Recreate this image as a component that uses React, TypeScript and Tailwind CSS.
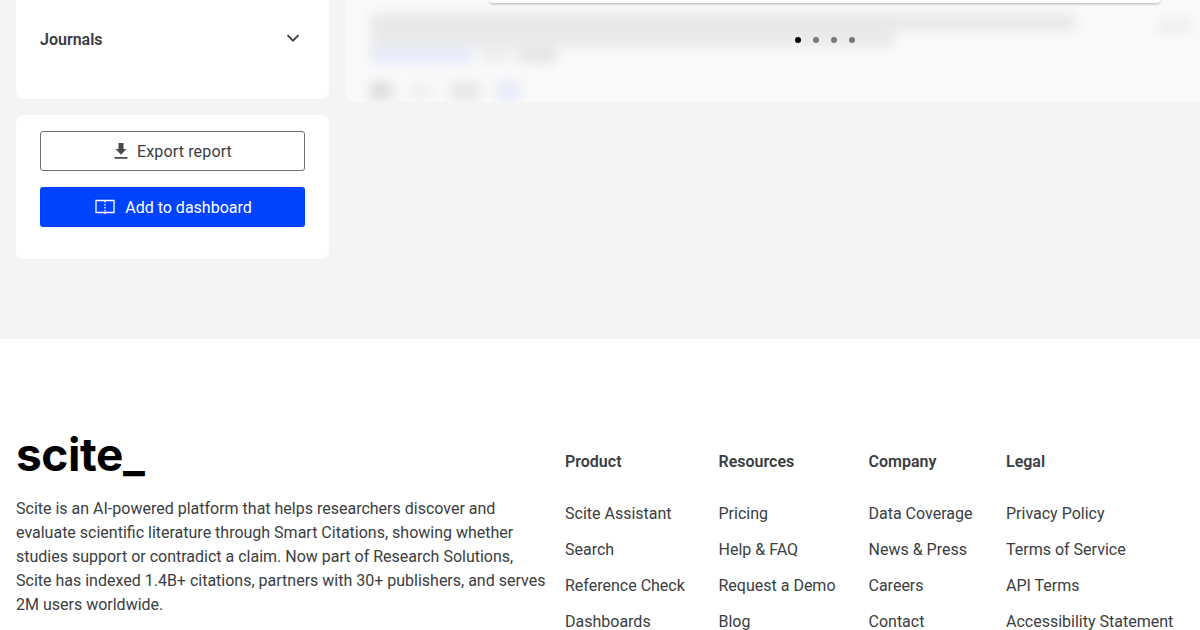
const font = "font-['Roboto','Liberation_Sans',sans-serif]";

const columns = [
  { title: "Product", className: "w-[153.5px]", links: ["Scite Assistant", "Search", "Reference Check", "Dashboards"] },
  { title: "Resources", className: "w-[150px]", links: ["Pricing", "Help & FAQ", "Request a Demo", "Blog"] },
  { title: "Company", className: "w-[137.5px]", links: ["Data Coverage", "News & Press", "Careers", "Contact"] },
  { title: "Legal", className: "w-[190px]", links: ["Privacy Policy", "Terms of Service", "API Terms", "Accessibility Statement"] },
];

function BlurredPreview() {
  return (
    <div className="relative h-[102px] flex-1 overflow-hidden rounded-bl-lg bg-[#fafafa]">
      <div className="flex h-[2px] justify-end pr-[40px]">
        <div className="h-[3px] w-[670px] rounded-b-lg bg-white shadow-[0_1px_3px_rgba(0,0,0,0.3)]" />
      </div>
      <div className="flex flex-col gap-[1px] pl-[24px] pt-[12px] blur-[6px]">
        <div className="h-[16px] w-[705px] bg-[#e6e7e7]" />
        <div className="h-[16px] w-[525px] bg-[#e8e9e9]" />
        <div className="flex gap-[8px]">
          <div className="h-[15px] w-[102px] bg-[#e6eafb]" />
          <div className="h-[15px] w-[30px] bg-[#eeeeee]" />
          <div className="h-[15px] w-[38px] bg-[#e4e4e4]" />
        </div>
        <div className="mt-[18px] flex gap-[16px]">
          <div className="h-[18px] w-[22px] bg-[#dcdcdc]" />
          <div className="h-[18px] w-[26px] bg-[#f1f1f1]" />
          <div className="h-[18px] w-[30px] bg-[#e6e6e6]" />
          <div className="h-[18px] w-[24px] bg-[#e6e9fb]" />
        </div>
      </div>
      <div className="absolute right-[8px] top-[20px] h-[12px] w-[34px] bg-[#ececec] blur-[6px]" />
      <div className="absolute left-[449px] top-[37px] flex gap-[12px]">
        <span className="size-[6px] rounded-full bg-black" />
        <span className="size-[6px] rounded-full bg-[#777777]" />
        <span className="size-[6px] rounded-full bg-[#777777]" />
        <span className="size-[6px] rounded-full bg-[#777777]" />
      </div>
    </div>
  );
}

export default function App() {
  return (
    <div className={`${font} h-[630px] overflow-hidden bg-white text-[16px] text-[#3a3d42]`}>
      <div className="flex h-[339px] items-start gap-[17px] bg-[#f4f4f4] pl-[16px]">
        <div className="flex w-[313px] flex-col gap-[16px]">
          <div className="flex h-[99px] items-start justify-between rounded-b-lg bg-white pl-[24px] pr-[28px] pt-[30px]">
            <span className="text-[16px] leading-[20px] font-semibold">Journals</span>
            <svg width="16" height="16" viewBox="0 0 16 16" fill="none">
              <path d="M2.5 5.2 8 10.7l5.5-5.5" stroke="#3a3d42" strokeWidth="1.8" />
            </svg>
          </div>
          <div className="flex h-[144px] flex-col gap-[16px] rounded-lg bg-white px-[24px] pt-[16px]">
            <button className="flex h-[40px] items-center justify-center gap-[8px] rounded-[3px] border border-[#6f6f78] bg-white">
              <svg width="16" height="16" viewBox="0 0 16 16" fill="#4a4a4a">
                <path d="M5.5 0h5v6h3L8 11.8 2.5 6h3zM1.5 14h13v1.8h-13z" />
              </svg>
              <span className="translate-y-[1px] tracking-[0.15px]">Export report</span>
            </button>
            <button className="flex h-[40px] items-center justify-center gap-[10px] rounded-[3px] bg-[#0043ff] pl-[2px] text-white">
              <svg width="20" height="16" viewBox="0 0 20 16" fill="none" stroke="white">
                <path d="M10 1.5H1v12h9m0-12h9v12h-9" strokeWidth="1.3" />
                <path d="M10 2v13" strokeWidth="1.3" strokeDasharray="1.5 1.5" />
              </svg>
              <span className="translate-y-[1px]">Add to dashboard</span>
            </button>
          </div>
        </div>
        <BlurredPreview />
      </div>
      <footer className="flex pl-[16px] pt-[88px]">
        <div className="w-[549px] pr-[18px]">
          <div className="flex h-[60px] items-start font-['Inter',sans-serif] text-[46px] leading-[54px] font-bold tracking-[-0.4px] text-black">
            scite_
          </div>
          <p className="m-0 mt-[10px] text-[16px] leading-[24px]">
            Scite is an AI-powered platform that helps researchers discover and
            <br />
            evaluate scientific literature through Smart Citations, showing whether
            <br />
            studies support or contradict a claim. Now part of Research Solutions,
            <br />
            Scite has indexed 1.4B+ citations, partners with 30+ publishers, and serves
            <br />
            2M users worldwide.
          </p>
        </div>
        <div className="flex pt-[23px]">
          {columns.map((col) => (
            <div key={col.title} className={col.className}>
              <div className="mb-[28px] leading-[24px] font-semibold">{col.title}</div>
              <ul className="flex flex-col gap-[12px]">
                {col.links.map((l) => (
                  <li key={l} className="leading-[24px] whitespace-nowrap">{l}</li>
                ))}
              </ul>
            </div>
          ))}
        </div>
      </footer>
    </div>
  );
}
